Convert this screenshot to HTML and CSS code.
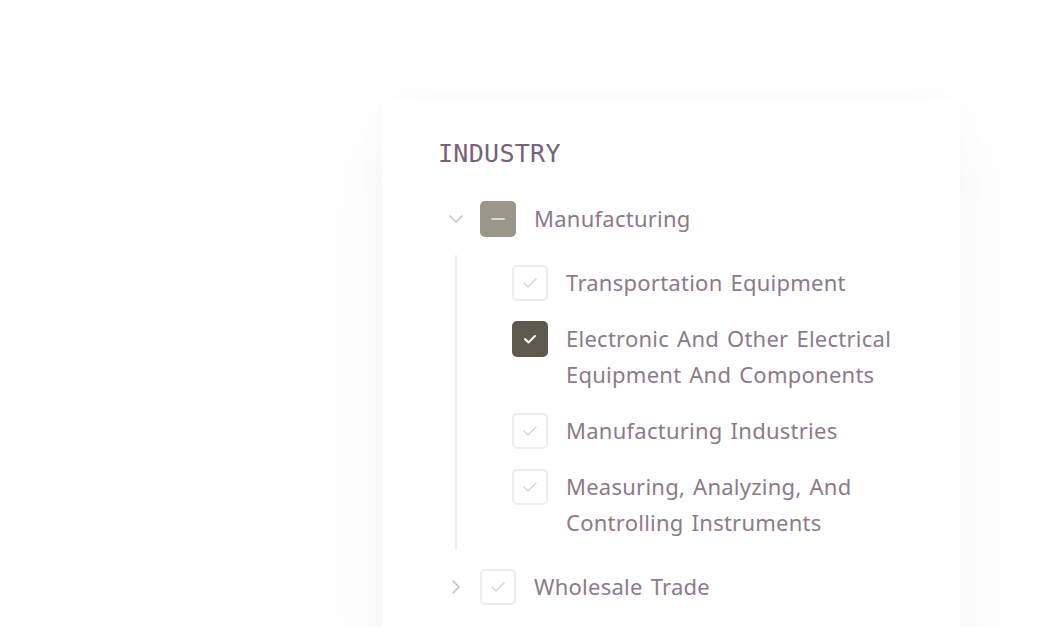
FILE: index.html
```html
<!DOCTYPE html>
<html lang="en">
<head>
<meta charset="utf-8">
<title>Industry filter</title>
<link rel="stylesheet" href="styles.css">
</head>
<body>
<div class="card">
  <h2 class="title">INDUSTRY</h2>
  <ul class="tree">
    <li class="node">
      <div class="row">
        <span class="toggle">
          <svg width="16" height="10" viewBox="0 0 16 10"><path d="M2 2 L8 8 L14 2" fill="none" stroke="currentColor" stroke-width="1.6" stroke-linecap="round" stroke-linejoin="round"/></svg>
        </span>
        <span class="box box-mixed"><span class="dash"></span></span>
        <span class="label">Manufacturing</span>
      </div>
      <ul class="children">
        <li class="row">
          <span class="box box-empty"><svg width="16" height="12" viewBox="0 0 16 12"><path d="M2 6 L6 10 L14 2" fill="none" stroke="currentColor" stroke-width="1.6" stroke-linecap="round" stroke-linejoin="round"/></svg></span>
          <span class="label">Transportation Equipment</span>
        </li>
        <li class="row">
          <span class="box box-checked"><svg width="14" height="10" viewBox="0 0 14 10"><path d="M2 5 L5.5 8.5 L12 2" fill="none" stroke="currentColor" stroke-width="2" stroke-linecap="round" stroke-linejoin="round"/></svg></span>
          <span class="label">Electronic And Other Electrical Equipment And Components</span>
        </li>
        <li class="row">
          <span class="box box-empty"><svg width="16" height="12" viewBox="0 0 16 12"><path d="M2 6 L6 10 L14 2" fill="none" stroke="currentColor" stroke-width="1.6" stroke-linecap="round" stroke-linejoin="round"/></svg></span>
          <span class="label">Manufacturing Industries</span>
        </li>
        <li class="row">
          <span class="box box-empty"><svg width="16" height="12" viewBox="0 0 16 12"><path d="M2 6 L6 10 L14 2" fill="none" stroke="currentColor" stroke-width="1.6" stroke-linecap="round" stroke-linejoin="round"/></svg></span>
          <span class="label">Measuring, Analyzing, And Controlling Instruments</span>
        </li>
      </ul>
    </li>
    <li class="node">
      <div class="row">
        <span class="toggle">
          <svg width="10" height="16" viewBox="0 0 10 16"><path d="M2 2 L8 8 L2 14" fill="none" stroke="currentColor" stroke-width="1.6" stroke-linecap="round" stroke-linejoin="round"/></svg>
        </span>
        <span class="box box-empty"><svg width="16" height="12" viewBox="0 0 16 12"><path d="M2 6 L6 10 L14 2" fill="none" stroke="currentColor" stroke-width="1.6" stroke-linecap="round" stroke-linejoin="round"/></svg></span>
        <span class="label">Wholesale Trade</span>
      </div>
    </li>
  </ul>
</div>
</body>
</html>
```

FILE: styles.css
```css
* { box-sizing: border-box; }
html, body { margin: 0; padding: 0; background: #ffffff; }
body { height: 627px; overflow: hidden; }

.card {
  width: 578px;
  min-height: 560px;
  margin: 100px 0 0 382px;
  padding: 39px 56px 0 56px;
  background: #ffffff;
  box-shadow: 0 30px 90px rgba(60, 50, 60, 0.04), 0 10px 40px rgba(60, 50, 60, 0.02);
}

.title {
  margin: 0;
  font-family: "DejaVu Sans Mono", "Liberation Mono", monospace;
  font-weight: 400;
  font-size: 25px;
  line-height: 30px;
  color: #77627a;
  letter-spacing: 0.3px;
}

.tree, .children { list-style: none; margin: 0; padding: 0; }
.tree { margin-top: 32px; }

.row {
  display: flex;
  align-items: flex-start;
  font-family: "Noto Sans", "Open Sans", sans-serif;
  font-size: 22px;
  line-height: 36px;
  letter-spacing: 0.25px;
  word-spacing: 2px;
  color: #8c7a8b;
}

.label { position: relative; top: -1px; }

.toggle {
  width: 36px;
  height: 36px;
  margin-right: 6px;
  display: flex;
  align-items: center;
  justify-content: center;
  color: #c8c0c7;
  flex-shrink: 0;
}

.box {
  width: 36px;
  height: 36px;
  border-radius: 5px;
  display: flex;
  align-items: center;
  justify-content: center;
  flex-shrink: 0;
  margin-right: 18px;
}
.box-empty { border: 2px solid #efecee; color: #dcd5da; }
.box-checked { background: #5d594e; color: #ffffff; }
.box-mixed { background: #9b968a; }
.dash { width: 14px; height: 2px; background: #dcd9d2; border-radius: 1px; }

.children {
  margin: 18px 0 19px 17px;
  padding: 10px 0 9px 55px;
  border-left: 2px solid #efedef;
  display: flex;
  flex-direction: column;
  gap: 20px;
}
```
